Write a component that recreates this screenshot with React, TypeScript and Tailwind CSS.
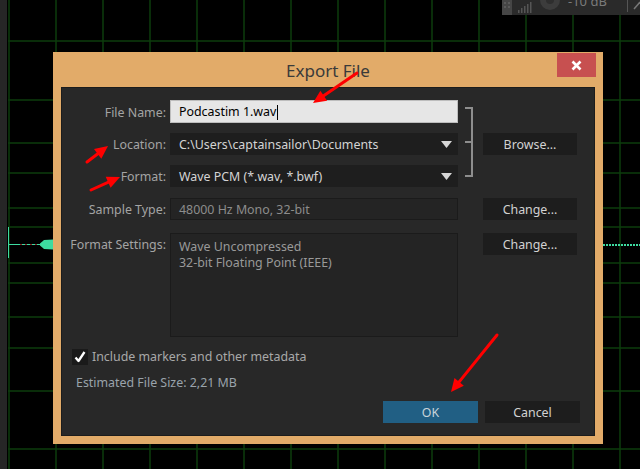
import React from 'react';

const vLines = [9, 56, 103, 150, 197, 244, 291, 338, 385, 432, 479, 526, 573, 620];
const hLines = [41, 100, 143, 173, 208, 227, 263, 283, 317, 348, 391, 449];

const Arrow = ({ x1, y1, x2, y2 }: { x1: number; y1: number; x2: number; y2: number }) => {
  const dx = x2 - x1;
  const dy = y2 - y1;
  const len = Math.hypot(dx, dy);
  const ux = dx / len;
  const uy = dy / len;
  const hl = 13;
  const hw = 6;
  const bx = x2 - ux * hl;
  const by = y2 - uy * hl;
  const pts = `${x2},${y2} ${bx - uy * hw},${by + ux * hw} ${bx + uy * hw},${by - ux * hw}`;
  return (
    <g>
      <line x1={x1} y1={y1} x2={bx + ux} y2={by + uy} stroke="#ff0000" strokeWidth={3} strokeLinecap="round" />
      <polygon points={pts} fill="#ff0000" />
    </g>
  );
};

const Caret = () => (
  <svg width="11" height="7" viewBox="0 0 11 7" className="mb-[3px] shrink-0">
    <polygon points="0,0 11,0 5.5,7" fill="#d6d6d6" />
  </svg>
);

const Label = ({ children, className = '' }: { children: React.ReactNode; className?: string }) => (
  <div className={`flex items-center justify-end whitespace-nowrap text-[12.4px] text-[#a4a4a4] ${className}`}>{children}</div>
);

const DarkButton = ({ children, className = '' }: { children: React.ReactNode; className?: string }) => (
  <button className={`flex h-[22px] w-[94px] items-center justify-center bg-[#1d1d1d] pt-[3px] text-[12.4px] text-[#d2d2d2] ${className}`}>
    {children}
  </button>
);

export default function App() {
  return (
    <div className="relative h-[469px] w-[640px] overflow-hidden bg-black font-['Noto_Sans','Liberation_Sans',sans-serif]">
      {/* waveform canvas */}
      <svg className="absolute inset-0" width="640" height="469">
        <rect x="0" y="0" width="7" height="469" fill="#262626" />
        {vLines.map((x) => (
          <line key={'v' + x} x1={x} y1={0} x2={x} y2={469} stroke="#0d3d0d" strokeWidth={1.5} />
        ))}
        {hLines.map((y) => (
          <line key={'h' + y} x1={8} y1={y} x2={640} y2={y} stroke="#0d3d0d" strokeWidth={1.5} />
        ))}
        <line x1="8.5" y1="227" x2="8.5" y2="258" stroke="#3ddba0" strokeWidth={1} />
        <line x1="9" y1="244.5" x2="44" y2="244.5" stroke="#3ddba0" strokeWidth={1.2} />
        <line x1="20" y1="244.5" x2="42" y2="244.5" stroke="#8a2a2a" strokeWidth={1} strokeDasharray="2 3" />
        <polygon points="40,243.5 44,240 53,239.5 53,249.5 44,249 40,245.5" fill="#3ddba0" />
        <line x1="603" y1="245" x2="640" y2="245" stroke="#3ddba0" strokeWidth={2} strokeDasharray="2 1" />

        {/* top toolbar */}
        <rect x="502" y="0" width="138" height="15" fill="#2a2a2a" />
        <rect x="502" y="0" width="10" height="15" fill="#464646" />
        <circle cx="505" cy="3" r="0.8" fill="#777" />
        <circle cx="509" cy="3" r="0.8" fill="#777" />
        <circle cx="505" cy="7" r="0.8" fill="#777" />
        <circle cx="509" cy="7" r="0.8" fill="#777" />
        <rect x="518" y="10" width="1.5" height="3" fill="#555" />
        <rect x="521" y="8" width="1.5" height="5" fill="#555" />
        <rect x="524" y="6" width="1.5" height="7" fill="#555" />
        <rect x="527" y="4" width="1.5" height="9" fill="#555" />
        <rect x="530" y="2" width="1.5" height="11" fill="#555" />
        <circle cx="550" cy="0" r="10" fill="#3c3c3c" />
        <circle cx="550" cy="0" r="4" fill="#2e2e2e" />
        <text x="568" y="6" fill="#7a7a7a" fontSize="13" fontFamily="Noto Sans, sans-serif">-10 dB</text>
        <line x1="627.5" y1="0" x2="627.5" y2="12" stroke="#555" strokeWidth={1} />
        <line x1="634" y1="9" x2="640" y2="2" stroke="#777" strokeWidth={1.5} />
      </svg>

      {/* dialog window */}
      <div className="absolute left-[53px] top-[52px] flex h-[392px] w-[550px] flex-col bg-[#e2ab69] px-2 pb-2">
        <div className="relative flex h-[35px] shrink-0 items-center justify-center pt-[2px]">
          <span className="text-[17px] text-[#3a3a3a]">Export File</span>
          <button className="absolute right-[-1px] top-[1px] flex h-[24px] w-[39px] items-center justify-center bg-[#c75050]">
            <svg width="11" height="11" viewBox="0 0 11 11">
              <path d="M1.5 1.5 L9.5 9.5 M9.5 1.5 L1.5 9.5" stroke="#ffffff" strokeWidth={2.6} />
            </svg>
          </button>
        </div>

        <div className="flex flex-1 flex-col bg-[#282828] shadow-[inset_0_0_0_1px_#1c1c1c]">
          <div className="grid grid-cols-[105px_288px_17px_94px] grid-rows-[23px_22px_22px_23px_107px] gap-x-[4px] gap-y-[10px] pt-[13px]">
            <Label className="col-start-1 row-start-1 pt-[3px]">File Name:</Label>
            <div className="col-start-2 row-start-1 flex items-center border border-[#bdbdbd] bg-[#e6e6e6] pl-[8px] pt-[2px] text-[12.4px] text-black">
              Podcastim 1.wav
              <span className="mb-[1px] ml-[1px] h-[15px] w-px bg-black" />
            </div>

            <div className="col-start-3 row-start-1 row-end-4 relative">
              <div className="ml-[3px] mt-[7px] flex h-[70px] w-[8px] flex-col justify-center border-y-2 border-r-2 border-[#8e8e8e]">
                <div className="h-[2px] w-[8px] bg-[#8e8e8e]" />
              </div>
            </div>

            <Label className="col-start-1 row-start-2 pt-[3px]">Location:</Label>
            <div className="col-start-2 row-start-2 flex items-center justify-between bg-[#1e1e1e] pl-[9px] pr-[6px] pt-[3px] text-[12.4px] text-[#d4d4d4]">
              <span>C:\Users\captainsailor\Documents</span>
              <Caret />
            </div>
            <DarkButton className="col-start-4 row-start-2">Browse...</DarkButton>

            <Label className="col-start-1 row-start-3 pt-[3px]">Format:</Label>
            <div className="col-start-2 row-start-3 flex items-center justify-between bg-[#1e1e1e] pl-[9px] pr-[6px] pt-[3px] text-[12.4px] text-[#d4d4d4]">
              <span>Wave PCM (*.wav, *.bwf)</span>
              <Caret />
            </div>

            <Label className="col-start-1 row-start-4 mt-[1px] h-[22px] pt-[3px]">Sample Type:</Label>
            <div className="col-start-2 row-start-4 mt-[1px] flex h-[22px] items-center border border-[#1b1b1b] bg-[#242424] pl-[8px] pt-[2px] text-[12.4px] text-[#8c8c8c]">
              48000 Hz Mono, 32-bit
            </div>
            <DarkButton className="col-start-4 row-start-4 mt-[1px]">Change...</DarkButton>

            <Label className="col-start-1 row-start-5 mt-[3px] items-start pt-[3px]">Format Settings:</Label>
            <div className="col-start-2 row-start-5 mt-[3px] border border-[#1b1b1b] bg-[#242424] px-[8px] pt-[5px] text-[12.4px] text-[#999999]">
              <div className="h-[16px] leading-[16px]">Wave Uncompressed</div>
              <div className="h-[16px] leading-[16px]">32-bit Floating Point (IEEE)</div>
            </div>
            <DarkButton className="col-start-4 row-start-5 mt-[3px]">Change...</DarkButton>
          </div>

          <div className="mt-[11px] flex items-center gap-[4px] pl-[11px]">
            <div className="flex h-[16px] w-[16px] items-center justify-center bg-[#1a1a1a]">
              <svg width="14" height="14" viewBox="0 0 14 14">
                <path d="M2.5 7.5 L5.5 11 L11.5 2" stroke="#ffffff" strokeWidth={2.3} fill="none" strokeLinejoin="round" />
              </svg>
            </div>
            <span className="text-[12.4px] text-[#a8a8a8]">Include markers and other metadata</span>
          </div>

          <div className="mt-[7px] pl-[15px] text-[12.4px] leading-[18px] text-[#9aa3ab]">Estimated File Size: 2,21 MB</div>

          <div className="mt-[9px] flex justify-end gap-[7px] pr-[15px]">
            <button className="flex h-[22px] w-[95px] items-center justify-center bg-[#215f84] pt-[3px] text-[12.4px] text-[#c9d3da]">OK</button>
            <DarkButton className="w-[95px]">Cancel</DarkButton>
          </div>
        </div>
      </div>

      {/* red annotation arrows */}
      <svg className="pointer-events-none absolute inset-0" width="640" height="469">
        <Arrow x1={357} y1={73} x2={313} y2={103} />
        <Arrow x1={87} y1={162} x2={108} y2={146} />
        <Arrow x1={91} y1={190} x2={120} y2={177} />
        <Arrow x1={497} y1={335} x2={451} y2={392} />
      </svg>
    </div>
  );
}
